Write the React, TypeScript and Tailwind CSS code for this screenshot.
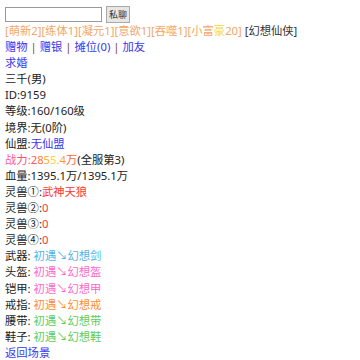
const tags = ["萌新2", "练体1", "凝元1", "意欲1", "吞噬1"];

const pets = [
  { n: "①", v: "武神天狼" },
  { n: "②", v: "0" },
  { n: "③", v: "0" },
  { n: "④", v: "0" },
];

const gear = [
  { slot: "武器", name: "初遇↘幻想剑", color: "text-[#4fb3e8]" },
  { slot: "头盔", name: "初遇↘幻想盔", color: "text-[#ff66cc]" },
  { slot: "铠甲", name: "初遇↘幻想甲", color: "text-[#ff66cc]" },
  { slot: "戒指", name: "初遇↘幻想戒", color: "text-[#ff8c33]" },
  { slot: "腰带", name: "初遇↘幻想带", color: "text-[#5ccc5c]" },
  { slot: "鞋子", name: "初遇↘幻想鞋", color: "text-[#5ccc5c]" },
];

const power = [
  { c: "text-[#ff5a99]", t: "战" },
  { c: "text-[#ff4a7a]", t: "力" },
  { c: "text-[#ff4a6a]", t: ":" },
  { c: "text-[#ff5566]", t: "2" },
  { c: "text-[#ff7a44]", t: "8" },
  { c: "text-[#ffaa33]", t: "5" },
  { c: "text-[#ffd633]", t: "5" },
  { c: "text-[#ffbb33]", t: "." },
  { c: "text-[#ff9933]", t: "4" },
  { c: "text-[#ff6633]", t: "万" },
];

function Sep() {
  return <span className="text-[#7a4a3a]"> | </span>;
}

export default function App() {
  return (
    <div className="min-h-[360px] bg-white px-[5px] pt-[6px] font-['Noto_Sans','Noto_Sans_CJK_SC',sans-serif] text-[11.3px] leading-[16.1px] text-[#222]">
      <div className="flex h-[17px] items-center">
        <input
          type="text"
          className="h-[15px] w-[97px] border border-[#999] bg-white px-1 text-[11px] outline-none"
        />
        <button className="ml-[4px] h-[17px] w-[24px] border border-[#aaa] bg-[#e6e6e6] text-[9px] leading-none text-[#333]">
          私聊
        </button>
      </div>

      <div className="whitespace-nowrap">
        {tags.map((t) => (
          <span key={t} className="text-[#f2a66a]">[{t}]</span>
        ))}
        <span className="text-[#f2a66a]">[小富</span>
        <span className="text-[#f5d73c]">豪</span>
        <span className="text-[#f2a66a]">20]</span>{" "}
        <span className="text-[#333]">[幻想仙侠]</span>
      </div>

      <div className="text-[#3838f0]">
        <a>赠物</a>
        <Sep />
        <a>赠银</a>
        <Sep />
        <a>摊位(0)</a>
        <Sep />
        <a>加友</a>
      </div>
      <div className="text-[#3838f0]">求婚</div>
      <div>三千(男)</div>
      <div>ID:9159</div>
      <div>等级:160/160级</div>
      <div>境界:无(0阶)</div>
      <div>
        仙盟:<span className="text-[#3838f0]">无仙盟</span>
      </div>
      <div>
        {power.map((p, i) => (
          <span key={i} className={p.c}>{p.t}</span>
        ))}
        (全服第3)
      </div>
      <div>血量:1395.1万/1395.1万</div>
      {pets.map((p) => (
        <div key={p.n}>
          灵兽{p.n}:<span className="text-[#ff3333]">{p.v}</span>
        </div>
      ))}
      {gear.map((g) => (
        <div key={g.slot}>
          {g.slot}: <span className={g.color}>{g.name}</span>
        </div>
      ))}
      <div className="text-[#3838f0]">返回场景</div>
    </div>
  );
}
